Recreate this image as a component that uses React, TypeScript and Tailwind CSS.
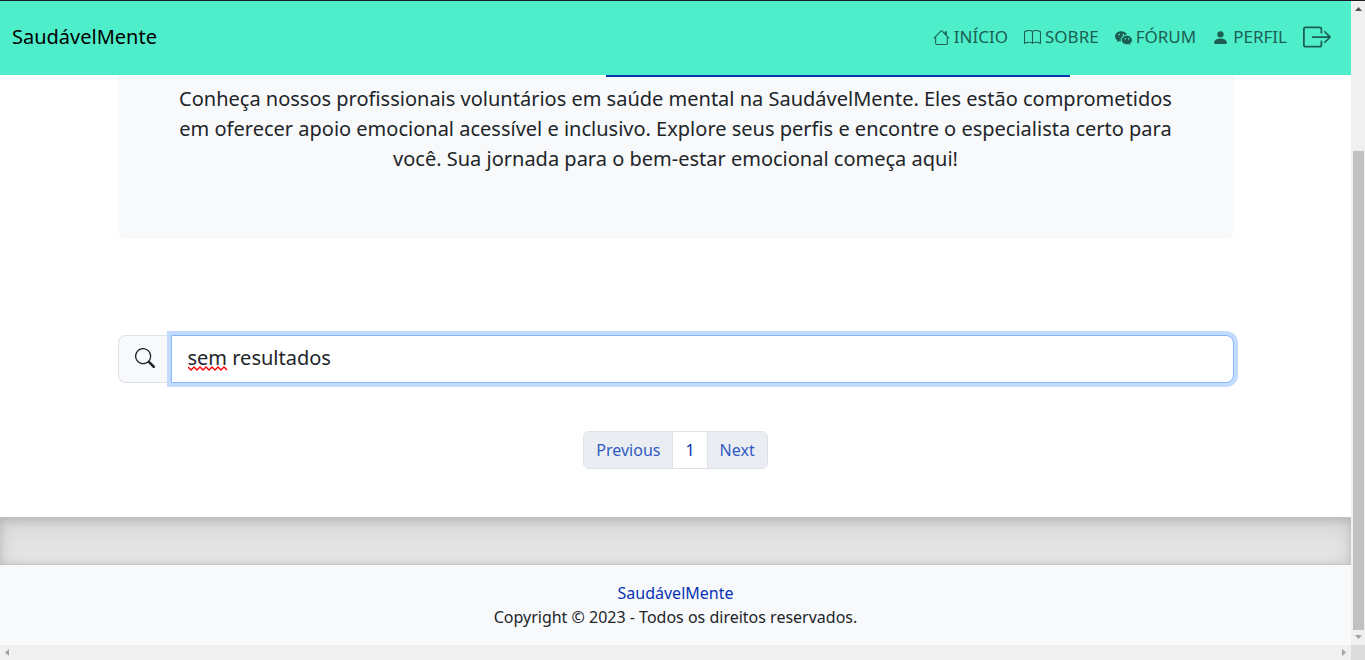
import { useState } from "react";
import type { ReactNode } from "react";
import {
  BsBook,
  BsBoxArrowRight,
  BsHouse,
  BsPersonFill,
  BsSearch,
  BsWechat,
} from "react-icons/bs";

function NavItem({ icon, label }: { icon: ReactNode; label: string }) {
  return (
    <a href="#" className="flex items-center gap-1 px-2 text-[17px] leading-6 text-[#1c5e52]">
      {icon}
      <span>{label}</span>
    </a>
  );
}

function Navbar() {
  return (
    <header className="flex h-[74px] shrink-0 items-center justify-between bg-[#4feecb] pb-0.5 pl-3 pr-5">
      <a href="#" className="text-xl text-black">
        SaudávelMente
      </a>
      <nav className="flex items-center">
        <NavItem icon={<BsHouse />} label="INÍCIO" />
        <NavItem icon={<BsBook />} label="SOBRE" />
        <NavItem icon={<BsWechat />} label="FÓRUM" />
        <NavItem icon={<BsPersonFill />} label="PERFIL" />
        <a href="#" aria-label="Sair" className="pl-2 text-[#1c5e52]">
          <BsBoxArrowRight className="size-7" />
        </a>
      </nav>
    </header>
  );
}

function Hero() {
  return (
    <section className="rounded-b-lg bg-[#f8f9fb] pb-[65px]">
      <div className="ml-[488px] h-[2px] w-[464px] bg-[#0a36b0]" />
      <p className="pt-[7px] text-center text-xl leading-[30px] text-[#212529]">
        Conheça nossos profissionais voluntários em saúde mental na SaudávelMente. Eles estão comprometidos
        <br />
        em oferecer apoio emocional acessível e inclusivo. Explore seus perfis e encontre o especialista certo para
        <br />
        você. Sua jornada para o bem-estar emocional começa aqui!
      </p>
    </section>
  );
}

function SearchBar() {
  const [query, setQuery] = useState("sem resultados");
  return (
    <div className="mt-24 flex h-12">
      <label
        htmlFor="search"
        aria-label="Pesquisar"
        className="flex w-[53px] items-center justify-center rounded-l-lg border border-r-0 border-[#dee2e6] bg-[#f8f9fb] pb-0.5 text-[#212529]"
      >
        <BsSearch className="size-5" />
      </label>
      <div className="relative flex-1">
        <input
          id="search"
          type="text"
          value={query}
          spellCheck={false}
          onChange={(event) => setQuery(event.target.value)}
          className="h-full w-full rounded-r-lg border border-[#86b7fe] bg-white px-4 pb-1 text-xl text-[#212529] shadow-[0_0_0_4px_#c2dbfe] outline-none"
        />
        {query.startsWith("sem") && (
          <svg
            aria-hidden="true"
            viewBox="0 0 40 5"
            className="pointer-events-none absolute bottom-3 left-[17px] h-[5px] w-10"
            fill="none"
            stroke="#ff0000"
            strokeWidth="1.4"
          >
            <path d="M0 1l3 3 3-3 3 3 3-3 3 3 3-3 3 3 3-3 3 3 3-3 3 3 3-3 3 3" />
          </svg>
        )}
      </div>
    </div>
  );
}

function Pagination() {
  return (
    <nav aria-label="Paginação" className="mt-12 flex justify-center">
      <div className="flex h-[38px] divide-x divide-[#dee2e6] overflow-hidden rounded-md border border-[#dee2e6] text-base">
        <button type="button" className="bg-[#eaeef2] px-3 text-[#325ac4]">
          Previous
        </button>
        <button type="button" className="bg-white px-3 text-[#0633b5]">
          1
        </button>
        <button type="button" className="bg-[#eaeef2] px-3 text-[#325ac4]">
          Next
        </button>
      </div>
    </nav>
  );
}

function Footer() {
  return (
    <footer className="grow bg-[#f8f9fb] py-4 text-center text-base text-[#212529]">
      <a href="#" className="text-[#0633b5]">
        SaudávelMente
      </a>
      <p>Copyright © 2023 - Todos os direitos reservados.</p>
    </footer>
  );
}

function VerticalScrollbar() {
  return (
    <div aria-hidden="true" className="flex w-3.5 shrink-0 flex-col items-center bg-[#f0f0f0]">
      <svg viewBox="0 0 14 15" className="h-[15px] w-3.5 shrink-0" fill="#505050">
        <path d="M7.5 6L11 10H4z" />
      </svg>
      <div className="grow-[135]" />
      <div className="w-[11px] grow-[479] bg-[#c1c1c1]" />
      <svg viewBox="0 0 14 15" className="h-[15px] w-3.5 shrink-0" fill="#a3a3a3">
        <path d="M4 5h7L7.5 9z" />
      </svg>
    </div>
  );
}

function HorizontalScrollbar() {
  return (
    <div aria-hidden="true" className="flex h-[15px] shrink-0 bg-[#f0f0f0]">
      <svg viewBox="0 0 15 15" className="size-[15px]" fill="#a3a3a3">
        <path d="M9 4v7L5 7.5z" />
      </svg>
      <div className="grow" />
      <svg viewBox="0 0 15 15" className="size-[15px]" fill="#a3a3a3">
        <path d="M6 4v7l4-3.5z" />
      </svg>
      <div className="w-3.5 bg-[#dcdcdc]" />
    </div>
  );
}

export default function App() {
  return (
    <div className="flex h-screen flex-col overflow-hidden border-t border-[#1c1b22] bg-white font-['Noto_Sans',sans-serif]">
      <div className="flex min-h-0 grow">
        <div className="flex min-w-0 grow flex-col">
          <Navbar />
          <main className="mx-auto mb-12 w-full max-w-[1116px]">
            <Hero />
            <SearchBar />
            <Pagination />
          </main>
          <div className="h-12 shrink-0 border-y border-black/15 bg-black/10 shadow-[inset_0_8px_24px_rgba(0,0,0,0.1),inset_0_2px_8px_rgba(0,0,0,0.15)]" />
          <Footer />
        </div>
        <VerticalScrollbar />
      </div>
      <HorizontalScrollbar />
    </div>
  );
}
